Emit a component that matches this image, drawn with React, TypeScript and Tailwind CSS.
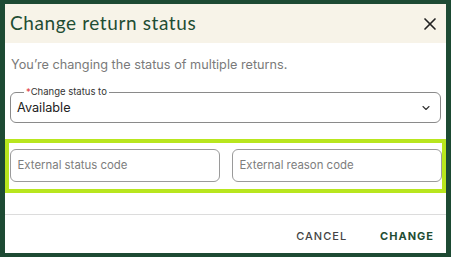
import { ChevronDown, X } from "lucide-react";

const font = { fontFamily: "Inter, 'Noto Sans', sans-serif" };

export default function App() {
  return (
    <div className="w-[451px] h-[257px] bg-[#1d4a33] pt-[4px] px-[5px] pb-[4px]" style={font}>
      <div className="h-full bg-white flex flex-col">
        <div className="h-[39px] shrink-0 bg-[#f7f3e8] flex items-center justify-between pl-[5px] pr-[6px]">
          <h2
            className="text-[19px] text-[#1f4d33] tracking-[0.6px]"
            style={{ fontFamily: "Lato, 'Noto Sans', sans-serif" }}
          >
            Change return status
          </h2>
          <X className="w-[20px] h-[20px] text-[#222]" strokeWidth={2} />
        </div>

        <p className="mt-[14px] px-[6px] text-[12.7px] leading-[16px] text-[#7a7a7a]">
          You’re changing the status of multiple returns.
        </p>

        <div className="relative mx-[5px] mt-[19px] h-[31px] shrink-0 border border-[#8a8a8a] rounded-[6px] pl-[6px] pr-[8px] flex items-center justify-between">
          <span className="absolute left-[13px] -top-[7px] bg-white px-[2px] text-[9.5px] leading-[12px] text-[#333]">
            <span className="text-[#e04040]">*</span>Change status to
          </span>
          <span className="text-[12.7px] text-[#222]">Available</span>
          <ChevronDown className="w-[12px] h-[12px] text-[#333]" strokeWidth={2.2} />
        </div>

        <div className="mt-[16px] shrink-0 border-[4px] border-[#b8e61e] pt-[6px] pb-[7px] px-[0.5px] flex gap-[12px]">
          <div className="flex-1 h-[33px] border border-[#9a9a9a] rounded-[6px] flex items-center px-[7px]">
            <span className="text-[11.4px] text-[#7d7d7d]">External status code</span>
          </div>
          <div className="flex-1 h-[33px] border border-[#9a9a9a] rounded-[6px] flex items-center px-[7px]">
            <span className="text-[11.4px] text-[#7d7d7d]">External reason code</span>
          </div>
        </div>

        <div className="mt-[21px] border-t border-[#dcdcdc] flex-1 flex items-center justify-end gap-[33px] pt-[5px] pr-[12px]">
          <span className="text-[11px] font-medium tracking-[1px] text-[#444]">CANCEL</span>
          <span className="text-[11px] font-bold tracking-[1px] text-[#1f4d33]">CHANGE</span>
        </div>
      </div>
    </div>
  );
}
